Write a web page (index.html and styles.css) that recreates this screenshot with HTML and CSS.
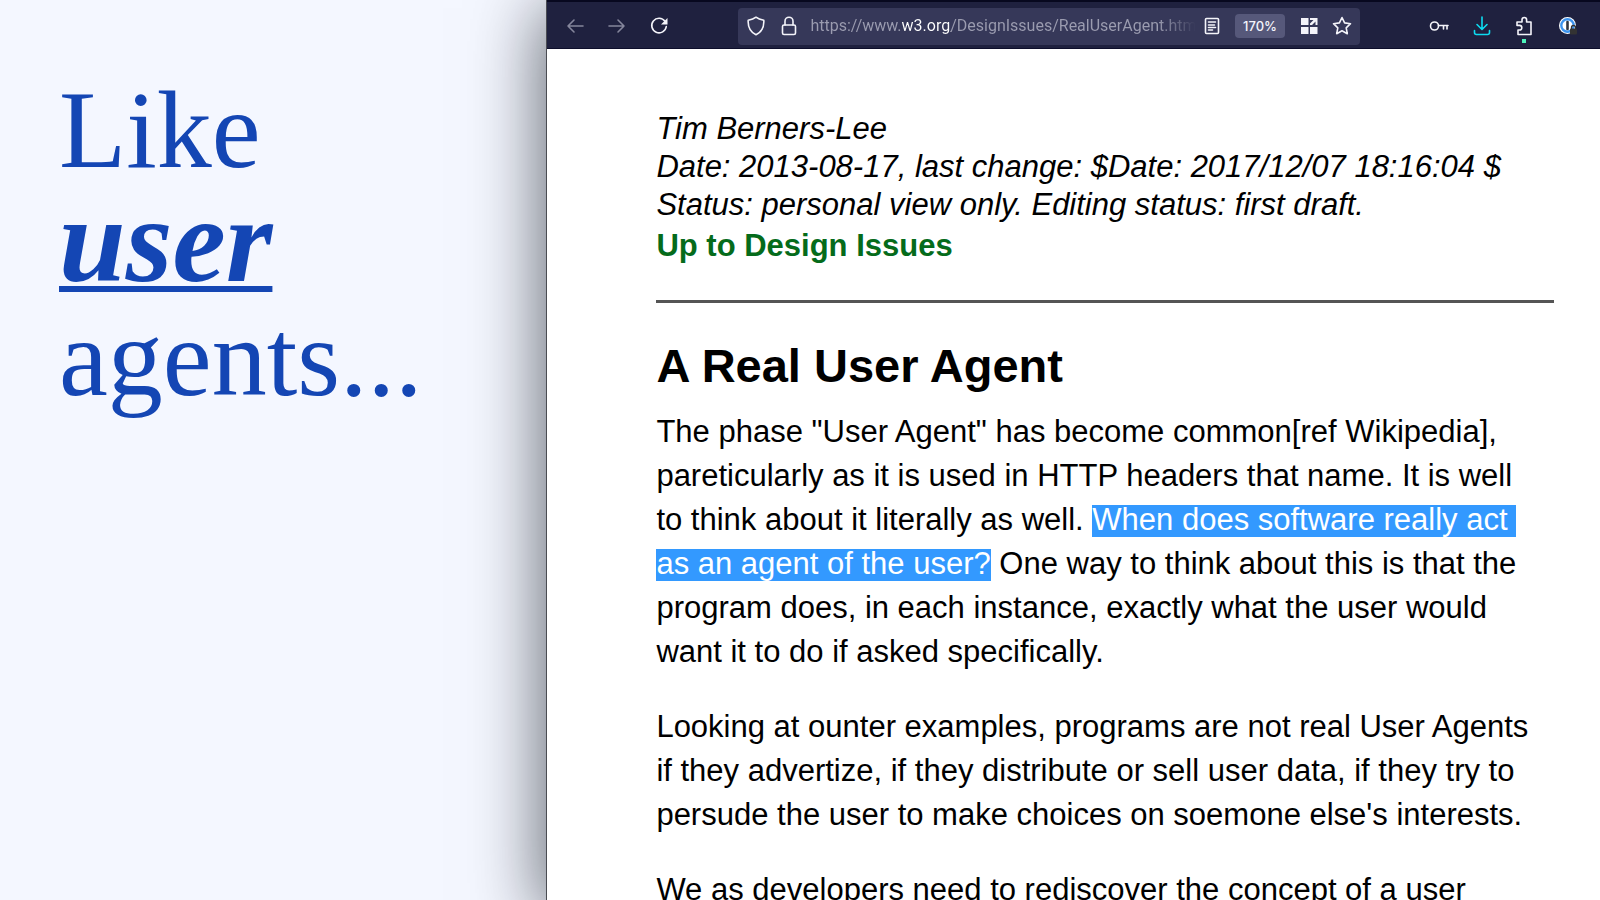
FILE: index.html
```html
<!DOCTYPE html>
<html lang="en">
<head>
  <meta charset="UTF-8">
  <title>Like user agents...</title>
  <link rel="stylesheet" href="styles.css">
</head>
<body>

<main class="slide">
  <section class="caption">
    <h1>Like<br><em>user</em><br>agents...</h1>
  </section>

  <section class="browser">
    <div class="toolbar">
      <button class="tool dim" aria-label="Back">
        <svg width="18" height="16" viewBox="0 0 18 16"><path d="M17 8H2M8 2L2 8l6 6"/></svg>
      </button>
      <button class="tool dim" aria-label="Forward">
        <svg width="18" height="16" viewBox="0 0 18 16"><path d="M1 8h15M10 2l6 6-6 6"/></svg>
      </button>
      <button class="tool" aria-label="Reload">
        <svg width="18" height="18" viewBox="0 0 18 18"><path d="M15 4.300A7.300 7.300 0 1 0 16.300 9.500"/><path class="solid" d="M17.500 1v6.500H11z"/></svg>
      </button>

      <div class="urlbar">
        <button class="small" aria-label="Tracking protection">
          <svg width="20" height="20" viewBox="0 0 20 20"><path d="M10 1.200c2.500 2 5 2.600 7.800 3.100.4 6.200-2 11.700-7.800 14.500C4.200 16 1.800 10.500 2.200 4.300 5 3.800 7.500 3.200 10 1.200z"/></svg>
        </button>
        <button class="small lock" aria-label="Connection secure">
          <svg width="16" height="20" viewBox="0 0 16 20"><rect x="1.500" y="9" width="13" height="9.500" rx="1.500"/><path d="M4 9V5.200a4 4 0 0 1 8 0V9"/></svg>
        </button>
        <input class="url" type="text" aria-label="Address" value="https://www.w3.org/DesignIssues/RealUserAgent.html">
        <button class="small" aria-label="Reader view">
          <svg width="16" height="18" viewBox="0 0 16 18"><rect x="1.500" y="1.500" width="13" height="15" rx="1"/><path d="M4.500 5h7M4.500 8h6M4.500 10.500h7M4.500 13h4"/></svg>
        </button>
        <button class="zoom">170%</button>
        <button class="small" aria-label="Open in tiles">
          <svg width="18" height="18" viewBox="0 0 18 18"><path class="solid" d="M1 1h7.500v7H1zM1 10h7.500v7H1zM10 10h7.500v7H10zM10 1h7.500v7h-2V4.500L12 8h-2V6.500L13.500 3H10z"/></svg>
        </button>
        <button class="small star" aria-label="Bookmark">
          <svg width="20" height="20" viewBox="0 0 20 20"><path d="M10 1.500l2.600 5.400 5.900.8-4.300 4.100 1.100 5.900L10 14.800l-5.300 2.900 1.100-5.900L1.500 7.700l5.900-.8z"/></svg>
        </button>
      </div>

      <button class="tool wide" aria-label="Passwords">
        <svg width="20" height="12" viewBox="0 0 20 12"><circle cx="5.500" cy="6" r="4"/><path d="M9.500 5.500H19M14.500 5.500V9M18 5.500V9"/></svg>
      </button>
      <button class="tool wide download" aria-label="Downloads">
        <svg width="18" height="20" viewBox="0 0 18 20"><path d="M9 1v12M4 8.500l5 5 5-5M1.500 14.500v2q0 2 2 2h11q2 0 2-2v-2"/></svg>
      </button>
      <button class="tool wide extensions" aria-label="Extensions">
        <svg width="18" height="20" viewBox="1 0 18 20"><path d="M3 18.500V14h1.500a2.300 2.300 0 0 0 0-4.600H2V6h5V3.800a2.300 2.300 0 0 1 4.600 0V6H16v12.500z"/></svg>
      </button>
      <button class="tool wide" aria-label="Password manager">
        <svg width="20" height="20" viewBox="0 0 20 20">
          <circle cx="9.500" cy="9.500" r="8.500" fill="#fff" stroke="none"/>
          <circle cx="9.500" cy="9.500" r="6.200" stroke="#3d94ef" stroke-width="2.400"/>
          <path d="M9.500 6v7" stroke="#303540" stroke-width="2.600"/>
          <rect x="12" y="12.500" width="7" height="6" rx="1" fill="#333" stroke="none"/>
          <path d="M13.500 13v-1.500a2 2 0 0 1 4 0V13" stroke="#333" stroke-width="1.300"/>
        </svg>
      </button>
    </div>

    <article class="page">
      <address>
        Tim Berners-Lee<br>
        Date: 2013-08-17, last change: $Date: 2017/12/07 18:16:04 $<br>
        Status: personal view only. Editing status: first draft.
      </address>
      <a class="up" href="#">Up to Design Issues</a>
      <hr>
      <h2>A Real User Agent</h2>
      <p>The phase "User Agent" has become common[ref Wikipedia], pareticularly as it is used in HTTP headers that name. It is well to think about it literally as well. <mark>When does software really act as an agent of the user?</mark> One way to think about this is that the program does, in each instance, exactly what the user would want it to do if asked specifically.</p>
      <p>Looking at ounter examples, programs are not real User Agents if they advertize, if they distribute or sell user data, if they try to persude the user to make choices on soemone else's interests.</p>
      <p>We as developers need to rediscover the concept of a user</p>
    </article>
  </section>
</main>

</body>
</html>
```
FILE: styles.css
```css
* {
  box-sizing: border-box;
}

body {
  margin: 0;
  background: #f4f7ff;
}

.slide {
  display: flex;
  height: 100vh;
  overflow: hidden;
}

/* Left side */
.caption {
  flex: 0 0 34.15%;
  padding: 73px 0 0 59px;
}

.caption h1 {
  margin: 0;
  font-family: "Liberation Serif", serif;
  font-size: 110px;
  line-height: 114px;
  font-weight: normal;
  color: #1446b4;
}

.caption em {
  font-size: 120px;
  font-weight: bold;
  line-height: 0;
  text-decoration: underline;
  text-decoration-thickness: 6px;
  text-decoration-skip-ink: none;
  text-underline-offset: 5px;
}

/* Browser window */
.browser {
  flex: 1;
  min-width: 0;
  border-left: 1px solid #4a4c52;
  background: #fff;
  box-shadow: 0 12px 66px 4px rgba(0, 8, 16, 0.6);
}

.toolbar {
  display: flex;
  align-items: center;
  height: 49px;
  padding: 2px 11px 0 7px;
  background: #1f213f;
  border-top: 2px solid #07081f;
  border-bottom: 1px solid #0d0e2b;
}

button {
  display: flex;
  align-items: center;
  justify-content: center;
  flex: none;
  padding: 0;
  border: 0;
  background: none;
  color: #f4f4fa;
}

svg {
  fill: none;
  stroke: currentColor;
  stroke-width: 1.6;
  stroke-linecap: round;
  stroke-linejoin: round;
}

.solid {
  fill: currentColor;
  stroke: none;
}

.tool {
  width: 42px;
  height: 36px;
}

.wide {
  width: 43px;
}

.dim {
  color: #85869c;
}

.download {
  color: #0ddcf0;
}

.extensions {
  position: relative;
}

.extensions::after {
  content: "";
  position: absolute;
  left: 19px;
  bottom: 1px;
  width: 4px;
  height: 4px;
  background: #4df5bb;
}

.urlbar {
  display: flex;
  align-items: center;
  flex: 1;
  min-width: 0;
  height: 37px;
  margin: 0 57px 0 58px;
  padding: 0 8px;
  border-radius: 4px;
  background: #363859;
}

.small {
  width: 20px;
  height: 28px;
}

.lock {
  margin: 0 11px 0 13px;
}

.star {
  margin-left: 13px;
}

/* the host is white, the rest grey, fading out at the end */
.url {
  flex: 1;
  min-width: 0;
  margin-right: 6px;
  padding: 0;
  border: 0;
  font-family: Roboto, sans-serif;
  font-size: 16px;
  line-height: 24px;
  color: transparent;
  background: linear-gradient(to right, #9b9cb0 92px, #fff 92px, #fff 141px, #9b9cb0 141px, #9b9cb0 90%, transparent);
  -webkit-background-clip: text;
  background-clip: text;
}

.zoom {
  width: 50px;
  height: 24px;
  margin: 0 14px 0 13px;
  border-radius: 4px;
  background: #56587a;
  font-family: Inter, sans-serif;
  font-size: 13px;
  font-weight: 500;
}

/* Article */
.page {
  padding: 61px 46px 0 109px;
  font-family: "Liberation Sans", Arial, sans-serif;
  font-size: 31px;
  line-height: 44px;
  color: #000;
}

.page address {
  line-height: 38px;
}

.up {
  font-weight: bold;
  color: #056b1b;
  text-decoration: none;
}

.page hr {
  height: 3px;
  margin: 32px 0 35px;
  border: 0;
  background: #555;
}

.page h2 {
  margin: 0;
  font-size: 47px;
  line-height: 56px;
}

.page p {
  margin: 16px 0 31px;
  padding-right: 16px;
}

.page mark {
  color: #fff;
  background: linear-gradient(transparent 3px, #3399ff 3px);
  white-space: break-spaces;
}
```
